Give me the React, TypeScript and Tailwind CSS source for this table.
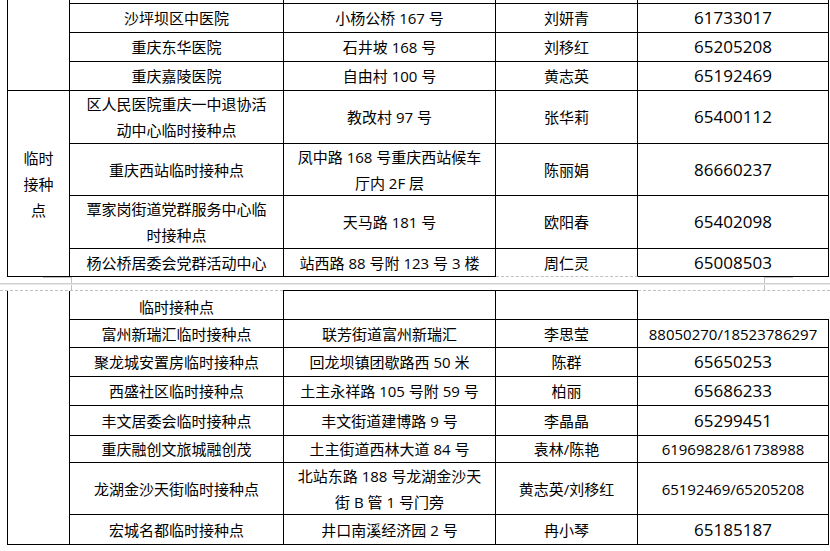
import React from "react";

const base =
  "flex items-center justify-center text-center border-r border-b border-black text-black text-[15px] leading-[26px] whitespace-nowrap";

function C({ children, cls = "" }: { children?: React.ReactNode; cls?: string }) {
  return <div className={`${base} ${cls}`}>{children}</div>;
}

function Phone({ v }: { v: string }) {
  return <C cls="text-[17px]">{v}</C>;
}

function LongPhone({ v }: { v: string }) {
  return <C cls="text-[15.5px]">{v}</C>;
}

export default function App() {
  return (
    <div className="w-[830px] h-[551px] bg-white overflow-hidden font-['Open_Sans','Noto_Sans_CJK_SC',sans-serif]">
      {/* top table */}
      <div className="ml-[7px] grid w-fit grid-cols-[62px_214px_212px_142px_191px] grid-rows-[4px_29px_29px_29px_53px_52px_53px_28px] border-l border-black">
        <div className="row-span-4 border-r border-b border-black" />
        <div className="border-r border-b border-black" />
        <div className="border-r border-b border-black" />
        <div className="border-r border-b border-black" />
        <div className="border-r border-b border-black" />

        <C>沙坪坝区中医院</C>
        <C>小杨公桥 167 号</C>
        <C>刘妍青</C>
        <Phone v="61733017" />

        <C>重庆东华医院</C>
        <C>石井坡 168 号</C>
        <C>刘移红</C>
        <Phone v="65205208" />

        <C>重庆嘉陵医院</C>
        <C>自由村 100 号</C>
        <C>黄志英</C>
        <Phone v="65192469" />

        <C cls="row-span-4">
          临时
          <br />
          接种
          <br />点
        </C>
        <C>
          区人民医院重庆一中退协活
          <br />
          动中心临时接种点
        </C>
        <C>教改村 97 号</C>
        <C>张华莉</C>
        <Phone v="65400112" />

        <C>重庆西站临时接种点</C>
        <C>
          凤中路 168 号重庆西站候车
          <br />
          厅内 2F 层
        </C>
        <C>陈丽娟</C>
        <Phone v="86660237" />

        <C>
          覃家岗街道党群服务中心临
          <br />
          时接种点
        </C>
        <C>天马路 181 号</C>
        <C>欧阳春</C>
        <Phone v="65402098" />

        <C>杨公桥居委会党群活动中心</C>
        <C>站西路 88 号附 123 号 3 楼</C>
        <C cls="border-b-[#c0c0c0] [border-bottom-style:dashed]">周仁灵</C>
        <Phone v="65008503" />
      </div>

      {/* page gap */}
      <div className="relative flex h-[13px] justify-between pl-[43px] pr-[37px]">
        <div className="w-[29px] border-t border-r border-[#c0c0c0]" />
        <div className="w-[29px] border-t border-l border-[#c0c0c0]" />
        <div className="absolute left-0 right-0 top-[6px] h-[2px] border-t border-[#d0d0d0] bg-[#e9e9e9]" />
      </div>

      {/* page top line */}
      <div className="flex h-px">
        <div className="w-[283px] border-t border-dashed border-[#c0c0c0]" />
        <div className="w-[355px] bg-black" />
        <div className="flex-1 border-t border-dashed border-[#c0c0c0]" />
      </div>

      {/* bottom table */}
      <div className="ml-[7px] grid w-fit grid-cols-[62px_214px_212px_142px_191px] grid-rows-[29px_28px_29px_29px_30px_27px_52px_30px] border-l border-black">
        <div className="row-span-8 border-r border-b border-black" />
        <C cls="pt-[3px]">临时接种点</C>
        <C />
        <C />
        <div className="border-b border-black" />

        <C>富州新瑞汇临时接种点</C>
        <C>联芳街道富州新瑞汇</C>
        <C>李思莹</C>
        <LongPhone v="88050270/18523786297" />

        <C>聚龙城安置房临时接种点</C>
        <C>回龙坝镇团歇路西 50 米</C>
        <C>陈群</C>
        <Phone v="65650253" />

        <C>西盛社区临时接种点</C>
        <C>土主永祥路 105 号附 59 号</C>
        <C>柏丽</C>
        <Phone v="65686233" />

        <C>丰文居委会临时接种点</C>
        <C>丰文街道建博路 9 号</C>
        <C>李晶晶</C>
        <Phone v="65299451" />

        <C>重庆融创文旅城融创茂</C>
        <C>土主街道西林大道 84 号</C>
        <C>袁林/陈艳</C>
        <LongPhone v="61969828/61738988" />

        <C>龙湖金沙天街临时接种点</C>
        <C>
          北站东路 188 号龙湖金沙天
          <br />
          街 B 管 1 号门旁
        </C>
        <C>黄志英/刘移红</C>
        <LongPhone v="65192469/65205208" />

        <C>宏城名都临时接种点</C>
        <C>井口南溪经济园 2 号</C>
        <C>冉小琴</C>
        <Phone v="65185187" />
      </div>
    </div>
  );
}
